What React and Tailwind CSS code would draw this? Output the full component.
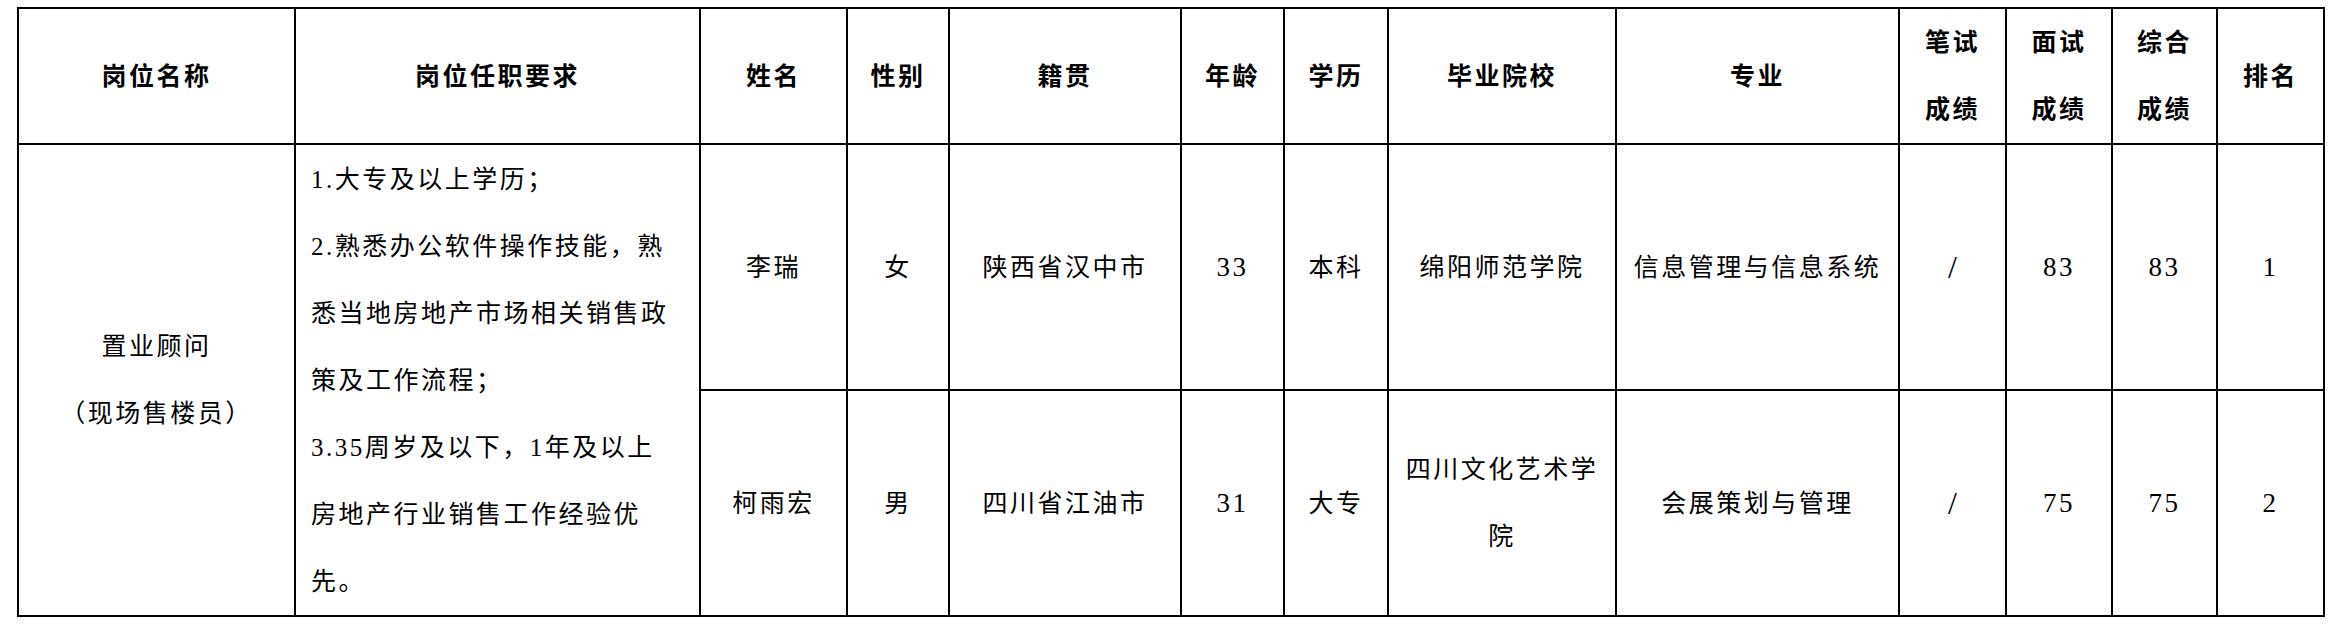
import React from 'react';

const head = 'border-2 border-black p-0 text-center align-middle font-bold';
const cell = 'border-2 border-black p-0 text-center align-middle';
const num = 'border-2 border-black p-0 text-center align-middle text-[27px]';

const people = [
  { name: '李瑞', sex: '女', origin: '陕西省汉中市', age: '33', edu: '本科', school: ['绵阳师范学院'], major: '信息管理与信息系统', written: '/', interview: '83', total: '83', rank: '1', h: 'h-[246px]' },
  { name: '柯雨宏', sex: '男', origin: '四川省江油市', age: '31', edu: '大专', school: ['四川文化艺术学', '院'], major: '会展策划与管理', written: '/', interview: '75', total: '75', rank: '2', h: 'h-[226px]' },
];

const requirements = [
  '1.大专及以上学历；',
  '2.熟悉办公软件操作技能，熟',
  '悉当地房地产市场相关销售政',
  '策及工作流程；',
  '3.35周岁及以下，1年及以上',
  '房地产行业销售工作经验优',
  '先。',
];

export default function App() {
  return (
    <div className="min-h-[626px] bg-white pl-[17px] pt-[7px] text-black font-['Liberation_Serif','Noto_Sans_CJK_SC',serif] text-[25px] leading-[67px] tracking-[2.5px]">
      <table className="table-fixed border-collapse border-2 border-black w-[2308px]">
        <colgroup>
          <col className="w-[277px]" />
          <col className="w-[405px]" />
          <col className="w-[147px]" />
          <col className="w-[102px]" />
          <col className="w-[232px]" />
          <col className="w-[103px]" />
          <col className="w-[104px]" />
          <col className="w-[228px]" />
          <col className="w-[283px]" />
          <col className="w-[107px]" />
          <col className="w-[106px]" />
          <col className="w-[105px]" />
          <col className="w-[107px]" />
        </colgroup>
        <thead>
          <tr className="h-[136px]">
            <th className={head}>岗位名称</th>
            <th className={head}>岗位任职要求</th>
            <th className={head}>姓名</th>
            <th className={head}>性别</th>
            <th className={head}>籍贯</th>
            <th className={head}>年龄</th>
            <th className={head}>学历</th>
            <th className={head}>毕业院校</th>
            <th className={head}>专业</th>
            <th className={head}>笔试<br />成绩</th>
            <th className={head}>面试<br />成绩</th>
            <th className={head}>综合<br />成绩</th>
            <th className={head}>排名</th>
          </tr>
        </thead>
        <tbody>
          {people.map((p, i) => (
            <tr key={p.name} className={p.h}>
              {i === 0 && (
                <>
                  <td rowSpan={2} className={cell}>
                    <div>置业顾问</div>
                    <div>（现场售楼员）</div>
                  </td>
                  <td rowSpan={2} className="border-2 border-black p-0 pl-[15px] text-left align-middle">
                    {requirements.map(line => <div key={line} className="whitespace-nowrap">{line}</div>)}
                  </td>
                </>
              )}
              <td className={cell}>{p.name}</td>
              <td className={cell}>{p.sex}</td>
              <td className={cell}>{p.origin}</td>
              <td className={num}>{p.age}</td>
              <td className={cell}>{p.edu}</td>
              <td className={cell}>{p.school.map(s => <div key={s}>{s}</div>)}</td>
              <td className={cell}>{p.major}</td>
              <td className="border-2 border-black p-0 text-center align-middle text-[32px] tracking-normal font-light">{p.written}</td>
              <td className={num}>{p.interview}</td>
              <td className={num}>{p.total}</td>
              <td className={num}>{p.rank}</td>
            </tr>
          ))}
        </tbody>
      </table>
    </div>
  );
}
